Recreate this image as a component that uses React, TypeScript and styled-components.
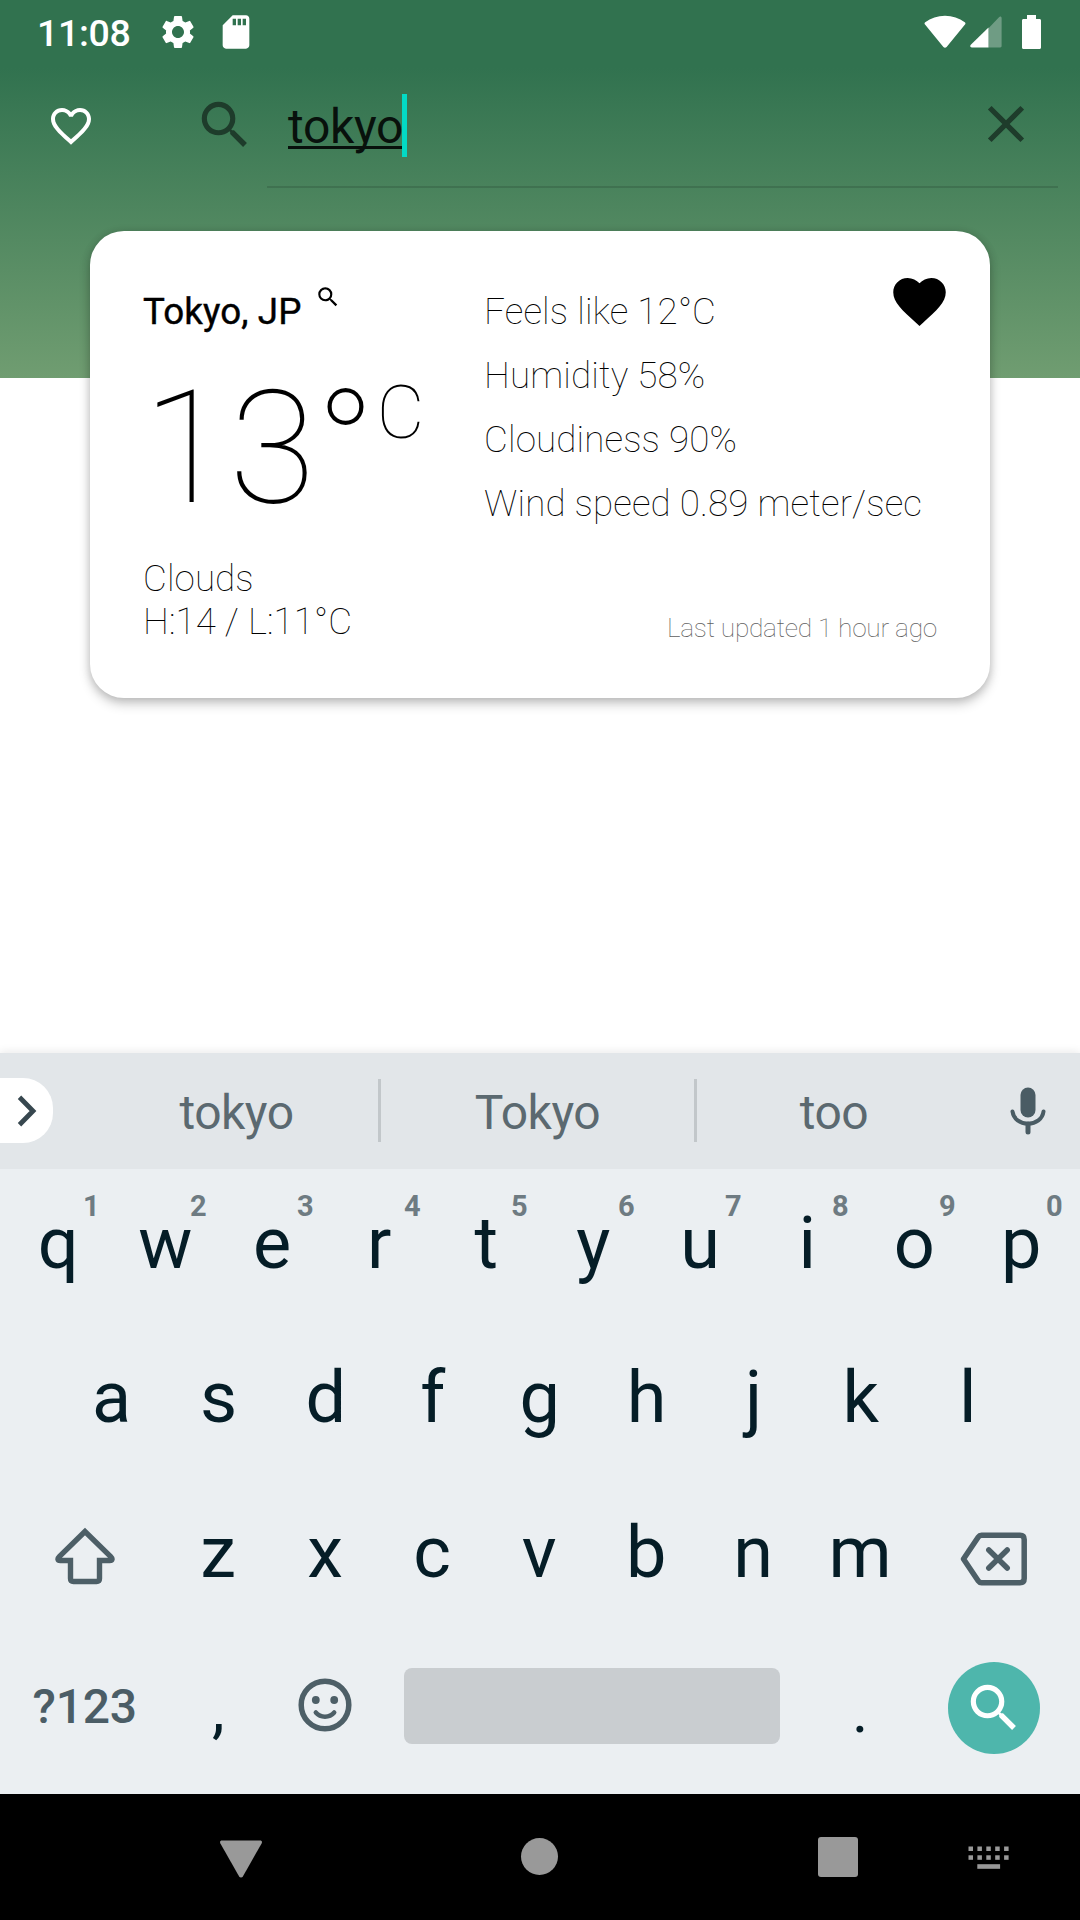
import React from 'react';
import styled, { createGlobalStyle } from 'styled-components';
import { MdSettings, MdSdCard, MdFavoriteBorder, MdFavorite, MdSearch, MdClose } from 'react-icons/md';

const GlobalStyle = createGlobalStyle`
  * { box-sizing: border-box; }
  body { margin: 0; background: #fff; font-family: Roboto, "Noto Sans", sans-serif; }
  svg { display: block; flex: none; }
`;

const Screen = styled.div`
  display: flex;
  flex-direction: column;
  width: 1080px;
  height: 1920px;
  overflow: hidden;
  background: #fff;
`;

const Header = styled.header`
  flex: none;
  height: 378px;
  background: linear-gradient(180deg, #31724f 0, #31724f 68px, #709d71 378px);
`;

const StatusBar = styled.div`
  display: flex;
  align-items: center;
  justify-content: space-between;
  height: 63px;
  padding: 0 39px 0 37px;
  color: #fff;
`;

const StatusGroup = styled.div<{ $gap: number }>`
  display: flex;
  align-items: center;
  gap: ${({ $gap }) => $gap}px;
`;

const Clock = styled.span`
  width: 103px;
  padding-top: 3px;
  font-size: 37.5px;
  font-weight: 500;
  letter-spacing: -0.35px;
  line-height: 46px;
`;

const SearchRow = styled.div`
  display: flex;
  align-items: center;
  height: 126px;
  padding-left: 46.5px;
`;

const SearchGlyph = styled.span`
  margin: 0 11px 2px 99.5px;
  color: #1e3c2b;
`;

const SearchField = styled.div`
  display: flex;
  align-items: center;
  align-self: flex-start;
  width: 791px;
  height: 125px;
  padding: 0 21px;
  border-bottom: 2px solid rgba(0, 0, 0, 0.13);
  color: #1e3c2b;

  svg { margin-bottom: 1px; }
`;

const Query = styled.span`
  margin-top: 5px;
  color: #08110c;
  font-size: 48px;
  line-height: 56px;
  letter-spacing: -0.3px;
  text-decoration: underline;
  text-decoration-skip-ink: none;
  text-decoration-thickness: 3px;
  text-underline-offset: 3px;
`;

const Caret = styled.span`
  width: 5px;
  height: 63px;
  margin-top: 1px;
  margin-left: -1px;
  margin-right: auto;
  background: #03dac5;
`;

const Card = styled.section`
  position: relative;
  flex: none;
  display: grid;
  grid-template-columns: 341px 1fr;
  width: 900px;
  height: 467px;
  margin: -147px auto 0;
  padding: 0 53px;
  border-radius: 34px;
  background: #fff;
  box-shadow: 0 6px 12px rgba(0, 0, 0, 0.2), 0 1px 8px rgba(0, 0, 0, 0.15);
`;

const Summary = styled.div`
  padding-top: 59px;
`;

const City = styled.div`
  display: flex;
  align-items: flex-start;
  gap: 13px;
  height: 43px;
  font-size: 36.75px;
  font-weight: 400;
  letter-spacing: 0.1px;
  line-height: 43px;
  -webkit-text-stroke: 0.4px #000;

  svg { margin-top: -6px; }
`;

const Temperature = styled.div`
  display: flex;
  margin-top: 23px;
  font-size: 157.5px;
  font-weight: 100;
  line-height: 185px;
`;

const Unit = styled.span`
  margin-top: 14px;
  margin-left: 1px;
  font-size: 73.5px;
  line-height: 86px;
`;

const Conditions = styled.div`
  margin-top: 16px;
  font-size: 36.75px;
  font-weight: 100;
  letter-spacing: 0.1px;
  line-height: 43px;
`;

const Details = styled.div`
  display: flex;
  flex-direction: column;
  padding: 48px 0 53px;
`;

const Detail = styled.div`
  display: flex;
  align-items: center;
  justify-content: space-between;
  height: 64px;
  font-size: 36.75px;
  font-weight: 100;
  letter-spacing: 0.14px;
  white-space: nowrap;
`;

const Favourite = styled.span`
  margin: 0 -14px 19px 0;
`;

const Updated = styled.div`
  margin-top: auto;
  color: #606060;
  font-size: 26.25px;
  font-weight: 100;
  letter-spacing: -0.25px;
  line-height: 34px;
  text-align: right;
`;

const Keyboard = styled.div`
  flex: none;
  height: 741px;
  margin-top: auto;
  background: #ebeff2;
  box-shadow: 0 -2px 8px rgba(0, 0, 0, 0.08);
`;

const SuggestionBar = styled.div`
  display: flex;
  align-items: center;
  height: 116px;
  padding-bottom: 1px;
  background: #e2e6e9;
`;

const Expand = styled.div`
  display: flex;
  align-items: center;
  justify-content: flex-end;
  width: 52.5px;
  height: 65px;
  margin-right: 42.5px;
  padding-right: 15.5px;
  border-radius: 0 30px 30px 0;
  background: #fff;
`;

const Suggestion = styled.div<{ $width: number }>`
  width: ${({ $width }) => $width}px;
  padding-top: 4px;
  color: #5b6970;
  font-size: 48px;
  letter-spacing: -0.5px;
  line-height: 56px;
  text-align: center;
`;

const Divider = styled.span`
  width: 3px;
  height: 63px;
  background: #c2c7ca;
`;

const MicSlot = styled.div`
  display: flex;
  flex: 1;
  justify-content: center;
  padding-left: 5px;
`;

const KeyRow = styled.div`
  display: flex;
  height: 154.5px;
  padding-left: 4.7px;
`;

const MiddleRow = styled(KeyRow)`
  padding-left: 58.2px;
`;

const Key = styled.div<{ $width?: number; $size?: number; $lift?: number; $drop?: number }>`
  position: relative;
  display: flex;
  align-items: center;
  justify-content: center;
  width: ${({ $width }) => $width ?? 107}px;
  padding-top: ${({ $drop }) => $drop ?? 0}px;
  padding-bottom: ${({ $lift }) => $lift ?? 6}px;
  color: #051d27;
  font-size: ${({ $size }) => $size ?? 72}px;
`;

const Hint = styled.span`
  position: absolute;
  top: 20px;
  right: 12px;
  color: #6e7b82;
  font-size: 29px;
  font-weight: 700;
  line-height: 34px;
`;

const ModeKey = styled(Key)`
  color: #4b5d66;
  font-weight: 500;
  letter-spacing: -0.2px;
`;

const Space = styled.div`
  width: 376px;
  height: 76px;
  margin: 35.5px 26.3px 0 25.7px;
  border-radius: 8px;
  background: #c9cdd0;
`;

const SearchButton = styled.div`
  display: flex;
  align-items: center;
  justify-content: center;
  width: 92px;
  height: 92px;
  border-radius: 50%;
  background: #4eb6ac;
  color: #fff;

  svg { margin: 1px 0 0 1px; }
`;

const NavBar = styled.nav`
  display: grid;
  grid-template-columns: 92px 298px 299px 298px 1fr;
  flex: none;
  height: 126px;
  background: #000;
`;

const NavItem = styled.div`
  display: flex;
  align-items: center;
  justify-content: center;
`;

const BackItem = styled(NavItem)`
  padding-top: 4px;
`;

const ImeItem = styled(NavItem)`
  justify-content: flex-start;
  margin-left: -19.5px;
  padding-top: 1px;
`;

const Home = styled.span`
  width: 37px;
  height: 37px;
  margin: 0 1px 1px 0;
  border-radius: 50%;
  background: #999;
`;

const Recents = styled.span`
  width: 40px;
  height: 40px;
  border-radius: 3px;
  background: #999;
`;

const WifiIcon = () => (
  <svg width="42" height="34" viewBox="0 0 42 34" fill="#fff">
    <path d="M1 9.4C.3 8.7.4 7.8 1.200 7.200 6.800 3 13.600.8 21 .8s14.200 2.200 19.800 6.400c.8.6.9 1.500.2 2.200L22.600 32c-.9 1.100-2.300 1.100-3.200 0z" />
  </svg>
);

const SignalIcon = () => (
  <svg width="32" height="32" viewBox="0 0 32 32">
    <path d="M18.500 12.200 29 1.200c1.200-1.200 2.600-.6 2.600 1V30c0 .9-.5 1.400-1.400 1.400H18.500z" fill="#fff" fillOpacity=".3" />
    <path d="M18.500 11.500V31.400H1.800C.2 31.400-.3 29.800.8 28.700z" fill="#fff" />
  </svg>
);

const BatteryIcon = () => (
  <svg width="19" height="34" viewBox="0 0 19 34" fill="#fff">
    <path d="M5 0h9v4h3.500c.9 0 1.500.6 1.500 1.500v27c0 .9-.6 1.500-1.500 1.500h-16C.6 34 0 33.400 0 32.500v-27C0 4.600.6 4 1.500 4H5z" />
  </svg>
);

const ChevronIcon = () => (
  <svg width="20" height="32" viewBox="0 0 20 32" fill="none" stroke="#37474f" strokeWidth="4.800">
    <path d="M2.500 2.300 16 16 2.500 29.700" />
  </svg>
);

const MicIcon = () => (
  <svg width="36" height="50" viewBox="0 0 36 50" fill="none" stroke="#4a5c64">
    <rect x="10.500" y="1.500" width="15" height="30" rx="7.500" fill="#4a5c64" stroke="none" />
    <path d="M2.500 25.500C3.500 33 10 37.700 18 37.700S32.500 33 33.500 25.500" strokeWidth="4" strokeLinecap="round" />
    <path d="M18 38v8" strokeWidth="5" strokeLinecap="round" />
  </svg>
);

const ShiftIcon = () => (
  <svg width="60" height="58" viewBox="0 0 60 58" fill="none" stroke="#4d5f67" strokeWidth="5.400">
    <path d="M30 4.500 4.300 29.600C2.200 31.700 2.600 33.500 5.300 33.500H15.500V51.500C15.500 53.500 16.500 54.500 18.500 54.500H41.500C43.500 54.500 44.500 53.500 44.500 51.500V33.500H54.700C57.400 33.500 57.800 31.700 55.700 29.600z" />
  </svg>
);

const BackspaceIcon = () => (
  <svg width="68" height="54" viewBox="0 0 68 54" fill="none" stroke="#4d5f67" strokeWidth="5.500" strokeLinejoin="round">
    <path d="M21.500 3.300H60c2.800 0 4.200 1.400 4.200 4.200v39c0 2.800-1.400 4.200-4.200 4.200H21.500c-1.500 0-2.400-.5-3.200-1.700L3.500 27 18.300 5c.8-1.200 1.700-1.700 3.200-1.700z" />
    <path d="M28.800 18 47.200 36M47.200 18 28.800 36" strokeLinecap="round" />
  </svg>
);

const EmojiIcon = () => (
  <svg width="54" height="54" viewBox="0 0 54 54" fill="none" stroke="#4d5f67">
    <circle cx="27" cy="27" r="23.800" strokeWidth="5.500" />
    <circle cx="17.800" cy="22" r="3.900" fill="#4d5f67" stroke="none" />
    <circle cx="36.200" cy="22" r="3.900" fill="#4d5f67" stroke="none" />
    <path d="M17.800 34.500C22.500 40 31.500 40 36.200 34.500" strokeWidth="4.500" strokeLinecap="round" />
  </svg>
);

const BackIcon = () => (
  <svg width="42" height="38" viewBox="0 0 42 38" fill="#999">
    <path d="M2 .5H40c1.800 0 2.500 1.300 1.600 2.900L23 36.300c-1 1.700-3 1.700-4 0L.4 3.400C-.5 1.800.2.5 2 .5z" />
  </svg>
);

const KeyboardIcon = () => (
  <svg width="42" height="24" viewBox="0 0 42 24" fill="#999">
    {[0, 1, 2, 3, 4].map((i) => (
      <React.Fragment key={i}>
        <rect x={0.5 + i * 8.9} y="0.500" width="4.500" height="4.500" />
        <rect x={0.5 + i * 8.9} y="9.300" width="4.500" height="4.500" />
      </React.Fragment>
    ))}
    <rect x="9.300" y="18.200" width="22.800" height="4.600" />
  </svg>
);

const topRow = 'qwertyuiop'.split('');
const middleRow = 'asdfghjkl'.split('');
const bottomRow = 'zxcvbnm'.split('');

export default function App() {
  return (
    <Screen>
      <GlobalStyle />
      <Header>
        <StatusBar>
          <StatusGroup $gap={18}>
            <Clock>11:08</Clock>
            <MdSettings size={40} />
            <MdSdCard size={40} />
          </StatusGroup>
          <StatusGroup $gap={20}>
            <StatusGroup $gap={4.5}>
              <WifiIcon />
              <SignalIcon />
            </StatusGroup>
            <BatteryIcon />
          </StatusGroup>
        </StatusBar>
        <SearchRow>
          <MdFavoriteBorder size={48} color="#fff" />
          <SearchGlyph><MdSearch size={62} /></SearchGlyph>
          <SearchField>
            <Query>tokyo</Query>
            <Caret />
            <MdClose size={62} />
          </SearchField>
        </SearchRow>
      </Header>

      <Card>
        <Summary>
          <City>
            Tokyo, JP
            <MdSearch size={26} />
          </City>
          <Temperature>
            13°<Unit>C</Unit>
          </Temperature>
          <Conditions>
            Clouds
            <br />
            H:14 / L:11°C
          </Conditions>
        </Summary>
        <Details>
          <Detail>
            Feels like 12°C
            <Favourite><MdFavorite size={63} /></Favourite>
          </Detail>
          <Detail>Humidity 58%</Detail>
          <Detail>Cloudiness 90%</Detail>
          <Detail>Wind speed 0.89 meter/sec</Detail>
          <Updated>Last updated 1 hour ago</Updated>
        </Details>
      </Card>

      <Keyboard>
        <SuggestionBar>
          <Expand><ChevronIcon /></Expand>
          <Suggestion $width={283}>tokyo</Suggestion>
          <Divider />
          <Suggestion $width={313}>Tokyo</Suggestion>
          <Divider />
          <Suggestion $width={274}>too</Suggestion>
          <MicSlot><MicIcon /></MicSlot>
        </SuggestionBar>
        <KeyRow>
          {topRow.map((letter, i) => (
            <Key key={letter}>
              {letter}
              <Hint>{(i + 1) % 10}</Hint>
            </Key>
          ))}
        </KeyRow>
        <MiddleRow>
          {middleRow.map((letter) => <Key key={letter}>{letter}</Key>)}
        </MiddleRow>
        <KeyRow>
          <Key $width={160} $lift={0} $drop={1}><ShiftIcon /></Key>
          {bottomRow.map((letter) => <Key key={letter}>{letter}</Key>)}
          <Key $width={160} $lift={0} $drop={7}><BackspaceIcon /></Key>
        </KeyRow>
        <KeyRow>
          <ModeKey $width={160} $size={48}>?123</ModeKey>
          <Key $size={64} $lift={0} $drop={0}>,</Key>
          <Key $lift={9}><EmojiIcon /></Key>
          <Space />
          <Key $size={62} $lift={0} $drop={1}>.</Key>
          <Key $width={160} $lift={4}>
            <SearchButton><MdSearch size={62} /></SearchButton>
          </Key>
        </KeyRow>
      </Keyboard>

      <NavBar>
        <span />
        <BackItem><BackIcon /></BackItem>
        <NavItem><Home /></NavItem>
        <NavItem><Recents /></NavItem>
        <ImeItem><KeyboardIcon /></ImeItem>
      </NavBar>
    </Screen>
  );
}
